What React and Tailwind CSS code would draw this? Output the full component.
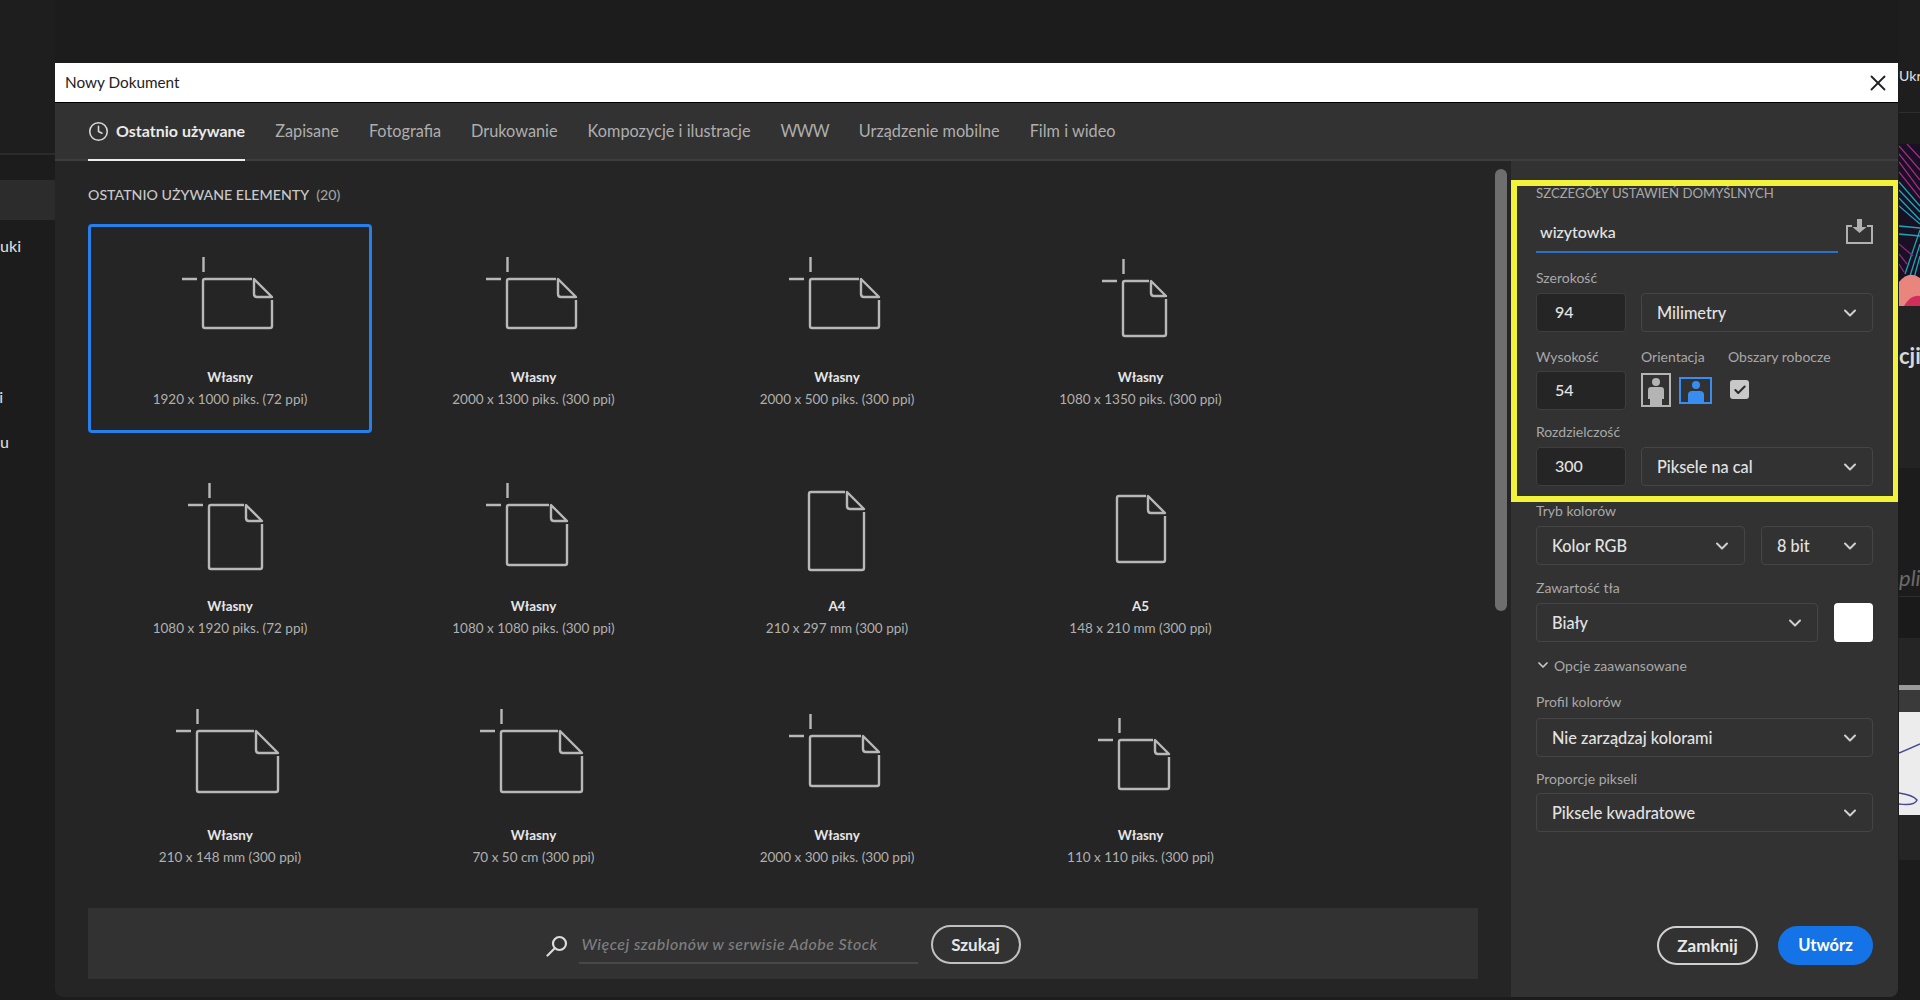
import React from 'react';
import { Clock, ChevronDown, Check, X } from 'lucide-react';

const tabs = ['Zapisane', 'Fotografia', 'Drukowanie', 'Kompozycje i ilustracje', 'WWW', 'Urządzenie mobilne', 'Film i wideo'];

// x, y, w, h of the sheet are measured from the card's top left corner, f is the folded corner
const presets = [
  { title: 'Własny', sub: '1920 x 1000 piks. (72 ppi)', x: 115, y: 55, w: 69, h: 49, f: 18, cross: true, selected: true },
  { title: 'Własny', sub: '2000 x 1300 piks. (300 ppi)', x: 115, y: 55, w: 69, h: 49, f: 18, cross: true },
  { title: 'Własny', sub: '2000 x 500 piks. (300 ppi)', x: 115, y: 55, w: 69, h: 49, f: 18, cross: true },
  { title: 'Własny', sub: '1080 x 1350 piks. (300 ppi)', x: 124, y: 57, w: 43, h: 55, f: 15, cross: true },
  { title: 'Własny', sub: '1080 x 1920 piks. (72 ppi)', x: 121, y: 52, w: 53, h: 64, f: 16, cross: true },
  { title: 'Własny', sub: '1080 x 1080 piks. (300 ppi)', x: 115, y: 52, w: 60, h: 60, f: 16, cross: true },
  { title: 'A4', sub: '210 x 297 mm (300 ppi)', x: 114, y: 39, w: 55, h: 78, f: 17 },
  { title: 'A5', sub: '148 x 210 mm (300 ppi)', x: 118, y: 43, w: 48, h: 66, f: 17 },
  { title: 'Własny', sub: '210 x 148 mm (300 ppi)', x: 109, y: 49, w: 81, h: 61, f: 22, cross: true },
  { title: 'Własny', sub: '70 x 50 cm (300 ppi)', x: 109, y: 49, w: 81, h: 61, f: 22, cross: true },
  { title: 'Własny', sub: '2000 x 300 piks. (300 ppi)', x: 115, y: 54, w: 69, h: 50, f: 16, cross: true },
  { title: 'Własny', sub: '110 x 110 piks. (300 ppi)', x: 120, y: 58, w: 50, h: 49, f: 14, cross: true },
];

function SheetIcon({ x, y, w, h, f, cross }) {
  return (
    <svg viewBox="3 3 278 140" className="w-[278px] h-[140px] shrink-0" fill="none" stroke="#b8b8b8" strokeWidth="2.4" strokeLinejoin="round">
      {cross && <path d={`M${x + 0.5} ${y - 22}V${y - 7}M${x - 21} ${y}H${x - 6}`} />}
      <path d={`M${x + w - f - 2} ${y}H${x + 2}q-2 0 -2 2V${y + h - 2}q0 2 2 2H${x + w - 2}q2 0 2 -2V${y + f + 3}`} />
      <path d={`M${x + w - f} ${y}V${y + f - 3}q0 3 3 3H${x + w}Z`} />
    </svg>
  );
}

function PresetCard({ title, sub, selected, ...icon }) {
  return (
    <div className={`h-[209px] flex flex-col items-center rounded border-[3px] ${selected ? 'border-[#2680eb]' : 'border-transparent'}`}>
      <SheetIcon {...icon} />
      <p className="h-5 leading-5 text-[13.4px] font-bold text-[#e6e6e6]">{title}</p>
      <p className="h-5 mt-0.5 leading-5 text-[13.5px] text-[#b0b0b0]">{sub}</p>
    </div>
  );
}

function Label({ children, className = '' }) {
  return <p className={`h-5 leading-5 text-[14px] text-[#a8a8a8] ${className}`}>{children}</p>;
}

function Select({ value, className = '' }) {
  return (
    <div className={`h-[39px] flex items-center justify-between pl-[15px] pr-[12px] pt-px rounded border border-[#454545] text-[16.3px] font-medium text-[#e2e2e2] ${className}`}>
      <span>{value}</span>
      <ChevronDown size={20} strokeWidth={2.4} color="#d0d0d0" />
    </div>
  );
}

function NumberField({ value }) {
  return (
    <div className="w-[90px] h-[39px] shrink-0 flex items-center pl-[18px] pb-[2px] rounded border border-[#3e3e3e] bg-[#252525] text-[16px] font-medium text-[#e2e2e2]">
      {value}
    </div>
  );
}

function BackgroundLeft() {
  return (
    <div className="w-[55px] shrink-0 overflow-hidden bg-[#1c1c1c] text-[16px] font-medium text-[#d8d8d8]">
      <div className="h-[155px] border-b-2 border-[#2b2b2b] bg-[#1e1e1e]" />
      <div className="h-[25px]" />
      <div className="h-[40px] bg-[#2c2c2c]" />
      <p className="mt-[14px] leading-6">uki</p>
      <p className="mt-[127px] -ml-[9px] leading-6">ki</p>
      <p className="mt-[21px] -ml-[9px] leading-6">nu</p>
    </div>
  );
}

function BackgroundRight() {
  return (
    <div className="w-[21px] ml-auto shrink-0 overflow-hidden bg-[#1c1c1c] text-[#d8d8d8]">
      <div className="h-[113px] pt-[64px] border-b border-[#2e2e2e] bg-[#1e1e1e] whitespace-nowrap text-[14px] font-medium leading-6">Ukr</div>
      <div className="h-[31px]" />
      <svg viewBox="0 0 21 162" className="block w-[21px] h-[162px]" fill="none" strokeWidth="1.3">
        <rect width="21" height="162" fill="#1a1024" />
        <path d="M0 2L21 26M0 10L21 36M0 18L21 46M0 28L21 54M8 0L21 14" stroke="#a12a86" />
        <path d="M0 38L21 62M0 46L21 68M0 54L21 76M0 62L21 80" stroke="#18a7b8" />
        <path d="M0 82L21 84M0 90L21 92" stroke="#18a7b8" />
        <path d="M21 86L6 130M21 100L11 132M21 112L15 134" stroke="#18a7b8" />
        <path d="M0 100L14 112M0 110L8 120M0 120L5 128" stroke="#8a2a80" />
        <path d="M0 162V138Q10 126 21 134V162Z" fill="#e8857c" stroke="none" />
        <path d="M5 162Q12 150 21 152V162Z" fill="#d02f5c" stroke="none" />
      </svg>
      <div className="h-[162px] pt-[37px] bg-[#232323] whitespace-nowrap text-[22px] font-bold leading-[26px]">cji</div>
      <div className="h-[129px] pt-[97px] border-b border-[#2e2e2e] whitespace-nowrap italic text-[22px] leading-[26px] text-[#6a6a6a]">pli</div>
      <div className="h-[41px] bg-[#1a1a1a]" />
      <div className="h-[222px] pt-[47px] bg-[#252525]">
        <div className="h-[5px] bg-[#9a9a9a]" />
        <div className="h-[22px] bg-[#3a3a3a]" />
        <svg viewBox="0 0 21 103" className="block w-[21px] h-[103px]" fill="none" stroke="#4a4a9a" strokeWidth="1.5">
          <rect width="21" height="103" fill="#ececec" stroke="none" />
          <path d="M0 41Q10 37 21 32" />
          <path d="M0 81Q14 83 18 88Q16 94 0 92" />
        </svg>
      </div>
    </div>
  );
}

function SearchBar() {
  return (
    <div className="h-[71px] mt-[17px] pt-[2px] flex items-center justify-center bg-[#323232]">
      <svg viewBox="0 0 22 22" className="w-[22px] h-[22px] mb-[-2px]" fill="none" stroke="#dcdcdc" strokeWidth="2.2" strokeLinecap="round">
        <circle cx="13.5" cy="8.5" r="6.5" />
        <path d="M8.5 13.5L1.5 20.5" />
      </svg>
      <div className="w-[339px] h-[39px] ml-[11px] pl-[3px] flex items-center border-b-2 border-[#484848] italic text-[16px] font-medium tracking-[0.5px] whitespace-nowrap text-[#7f7f7f]">
        Więcej szablonów w serwisie Adobe Stock
      </div>
      <button className="w-[90px] h-[39px] ml-[13px] rounded-full border-2 border-[#c0c0c0] text-[17px] font-bold text-[#e6e6e6]">Szukaj</button>
    </div>
  );
}

function DetailsPanel() {
  return (
    <div className="relative w-[387px] shrink-0 flex flex-col bg-[#323232] pl-[25px] pr-[25px] pt-[22px]">
      <div className="absolute left-0 top-[19px] w-[388px] h-[322px] border-[6px] border-[#f2f23a]" />
      <p className="h-5 leading-5 text-[13.2px] text-[#a8a8a8] whitespace-nowrap">SZCZEGÓŁY USTAWIEŃ DOMYŚLNYCH</p>

      <div className="mt-[10px] flex items-start justify-between">
        <div className="w-[302px] h-[40px] pl-[4px] pt-[9px] border-b-2 border-[#2d6fc9] text-[16px] font-medium leading-5 text-[#e4e4e4]">wizytowka</div>
        <svg viewBox="0 0 27 25" className="w-[27px] h-[25px] mt-[6px]" fill="none">
          <path d="M6 7H1V24H26V7H21" stroke="#b0b0b0" strokeWidth="2" />
          <path d="M11 0H16V8H20.5L13.5 14L6.5 8H11Z" fill="#b0b0b0" />
        </svg>
      </div>

      <Label className="mt-[15px]">Szerokość</Label>
      <div className="mt-[5px] flex gap-[15px]">
        <NumberField value="94" />
        <Select value="Milimetry" className="flex-1" />
      </div>

      <div className="mt-[15px] flex">
        <div className="w-[90px]">
          <Label>Wysokość</Label>
          <div className="mt-[4px]"><NumberField value="54" /></div>
        </div>
        <div className="w-[87px] ml-[15px]">
          <Label>Orientacja</Label>
          <div className="mt-[6px] flex items-center gap-2 h-[34px]">
            <svg viewBox="0 0 30 34" className="w-[30px] h-[34px] shrink-0">
              <rect x="1" y="1" width="28" height="32" fill="none" stroke="#b4b4b4" strokeWidth="2" />
              <circle cx="15" cy="9" r="4" fill="#b4b4b4" />
              <path d="M7 17Q7 14 10 14H20Q23 14 23 17V26H21V33H9V26H7Z" fill="#b4b4b4" />
            </svg>
            <svg viewBox="0 0 33 27" className="w-[33px] h-[27px] shrink-0">
              <rect x="1" y="1" width="31" height="25" fill="none" stroke="#378ef0" strokeWidth="2" />
              <circle cx="17" cy="8" r="4" fill="#378ef0" />
              <path d="M9 25V18Q9 14 13 14H21Q25 14 25 18V25Z" fill="#378ef0" />
            </svg>
          </div>
        </div>
        <div>
          <Label>Obszary robocze</Label>
          <div className="w-[19px] h-[19px] mt-[13px] ml-[2px] flex items-center justify-center rounded-[3px] bg-[#c8c8c8]">
            <Check size={14} strokeWidth={3.5} color="#2a2a2a" />
          </div>
        </div>
      </div>

      <Label className="mt-[12px]">Rozdzielczość</Label>
      <div className="mt-[5px] flex gap-[15px]">
        <NumberField value="300" />
        <Select value="Piksele na cal" className="flex-1" />
      </div>

      <Label className="mt-[15px]">Tryb kolorów</Label>
      <div className="mt-[5px] flex gap-4">
        <Select value="Kolor RGB" className="flex-1" />
        <Select value="8 bit" className="w-[112px] shrink-0" />
      </div>

      <Label className="mt-[13px]">Zawartość tła</Label>
      <div className="mt-[5px] flex gap-4">
        <Select value="Biały" className="flex-1" />
        <div className="w-[39px] h-[39px] shrink-0 rounded-sm bg-white" />
      </div>

      <div className="mt-[13px] h-5 flex items-center gap-[3px] text-[14px] text-[#a8a8a8]">
        <ChevronDown size={16} strokeWidth={2.6} color="#c8c8c8" className="-ml-[1px]" />
        Opcje zaawansowane
      </div>

      <Label className="mt-[17px]">Profil kolorów</Label>
      <Select value="Nie zarządzaj kolorami" className="mt-[6px]" />

      <Label className="mt-[12px]">Proporcje pikseli</Label>
      <Select value="Piksele kwadratowe" className="mt-[4px]" />

      <div className="mt-[94px] flex justify-end gap-5">
        <button className="w-[101px] h-[39px] rounded-full border-2 border-[#d0d0d0] text-[17px] font-bold text-[#e8e8e8]">Zamknij</button>
        <button className="w-[95px] h-[39px] rounded-full bg-[#1473e6] text-[16.5px] font-bold text-white">Utwórz</button>
      </div>
    </div>
  );
}

export default function App() {
  return (
    <div className="relative w-[1920px] h-[1000px] flex overflow-hidden bg-[#1c1c1c] font-['Lato',sans-serif]">
      <BackgroundLeft />
      <BackgroundRight />

      <div className="absolute left-[55px] top-[63px] w-[1843px] h-[934px] flex flex-col overflow-hidden rounded-b-lg">
        <div className="h-[39px] shrink-0 flex items-center justify-between pl-[10px] pr-[7px] bg-white text-[15.3px] text-[#222222]">
          <span>Nowy Dokument</span>
          <X size={26} strokeWidth={1.7} color="#222222" />
        </div>
        <div className="h-px shrink-0 bg-black" />

        <div className="h-[58px] shrink-0 flex items-stretch gap-[30px] pl-[33px] bg-[#323232] border-b-2 border-[#3e3e3e] text-[16.3px] text-[#aeaeae]">
          <div className="relative flex items-center gap-[7px] text-[16px] font-bold text-[#eaeaea]">
            <Clock size={21} strokeWidth={1.8} color="#d8d8d8" />
            Ostatnio używane
            <div className="absolute left-0 right-0 -bottom-[2px] h-[2px] bg-[#ececec]" />
          </div>
          {tabs.map((tab) => (
            <div key={tab} className={`flex items-center ${tab === 'WWW' ? 'tracking-[-0.8px]' : ''}`}>{tab}</div>
          ))}
        </div>

        <div className="flex-1 flex min-h-0">
          <div className="flex-1 flex bg-[#252525] pl-[33px]">
            <div className="w-[1390px]">
              <p className="h-5 mt-[24px] leading-5 text-[14.2px] font-medium text-[#c8c8c8]">
                OSTATNIO UŻYWANE ELEMENTY <span className="ml-1 text-[#a0a0a0]">(20)</span>
              </p>
              <div className="mt-[19px] grid grid-cols-[repeat(4,284px)] gap-x-[19.5px] gap-y-5">
                {presets.map((preset) => (
                  <PresetCard key={preset.sub} {...preset} />
                ))}
              </div>
              <SearchBar />
            </div>
            <div className="w-3 h-[442px] mt-2 ml-[17px] rounded-full bg-[#6e6e6e]" />
          </div>
          <DetailsPanel />
        </div>
      </div>
    </div>
  );
}
